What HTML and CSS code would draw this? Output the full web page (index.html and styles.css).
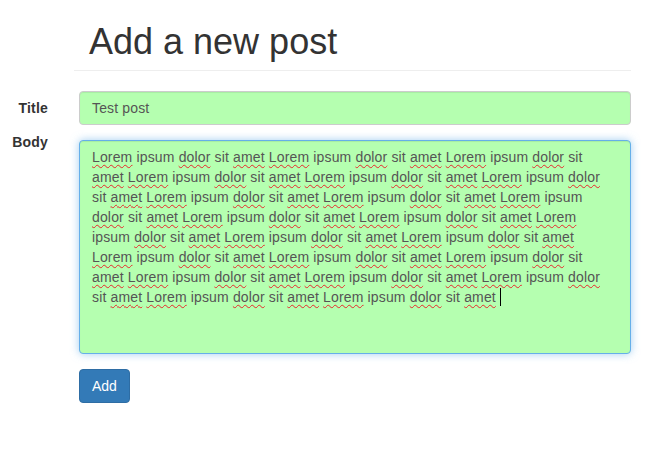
FILE: index.html
```html
<!DOCTYPE html>
<html>
<head>
<meta charset="utf-8">
<link rel="stylesheet" href="styles.css">
</head>
<body>
<div class="page">
  <div class="page-header"><h1>Add a new post</h1></div>
  <form class="form">
    <div class="row row-title">
      <label class="label">Title</label>
      <div class="control input">Test post</div>
    </div>
    <div class="row row-body">
      <label class="label label-body">Body</label>
      <div class="control textarea">
        <span class="line"><span class="sp">Lorem</span> ipsum <span class="sp">dolor</span> sit <span class="sp">amet</span> <span class="sp">Lorem</span> ipsum <span class="sp">dolor</span> sit <span class="sp">amet</span> <span class="sp">Lorem</span> ipsum <span class="sp">dolor</span> sit</span>
        <span class="line"><span class="sp">amet</span> <span class="sp">Lorem</span> ipsum <span class="sp">dolor</span> sit <span class="sp">amet</span> <span class="sp">Lorem</span> ipsum <span class="sp">dolor</span> sit <span class="sp">amet</span> <span class="sp">Lorem</span> ipsum <span class="sp">dolor</span></span>
        <span class="line">sit <span class="sp">amet</span> <span class="sp">Lorem</span> ipsum <span class="sp">dolor</span> sit <span class="sp">amet</span> <span class="sp">Lorem</span> ipsum <span class="sp">dolor</span> sit <span class="sp">amet</span> <span class="sp">Lorem</span> ipsum</span>
        <span class="line"><span class="sp">dolor</span> sit <span class="sp">amet</span> <span class="sp">Lorem</span> ipsum <span class="sp">dolor</span> sit <span class="sp">amet</span> <span class="sp">Lorem</span> ipsum <span class="sp">dolor</span> sit <span class="sp">amet</span> <span class="sp">Lorem</span></span>
        <span class="line">ipsum <span class="sp">dolor</span> sit <span class="sp">amet</span> <span class="sp">Lorem</span> ipsum <span class="sp">dolor</span> sit <span class="sp">amet</span> <span class="sp">Lorem</span> ipsum <span class="sp">dolor</span> sit <span class="sp">amet</span></span>
        <span class="line"><span class="sp">Lorem</span> ipsum <span class="sp">dolor</span> sit <span class="sp">amet</span> <span class="sp">Lorem</span> ipsum <span class="sp">dolor</span> sit <span class="sp">amet</span> <span class="sp">Lorem</span> ipsum <span class="sp">dolor</span> sit</span>
        <span class="line"><span class="sp">amet</span> <span class="sp">Lorem</span> ipsum <span class="sp">dolor</span> sit <span class="sp">amet</span> <span class="sp">Lorem</span> ipsum <span class="sp">dolor</span> sit <span class="sp">amet</span> <span class="sp">Lorem</span> ipsum <span class="sp">dolor</span></span>
        <span class="line">sit <span class="sp">amet</span> <span class="sp">Lorem</span> ipsum <span class="sp">dolor</span> sit <span class="sp">amet</span> <span class="sp">Lorem</span> ipsum <span class="sp">dolor</span> sit <span class="sp">amet</span>&nbsp;<span class="caret"></span></span>
      </div>
    </div>
    <div class="row row-btn">
      <button type="button" class="btn">Add</button>
    </div>
  </form>
</div>
</body>
</html>
```

FILE: styles.css
```css
html, body {
  margin: 0;
  padding: 0;
  background: #fff;
}
body {
  font-family: "Liberation Sans", Arial, sans-serif;
  font-size: 14px;
  line-height: 20px;
  color: #333;
}
.page {
  padding: 0 17px 0 0;
}
.page-header {
  margin: 22px 0 20px 74px;
  padding-bottom: 8px;
  border-bottom: 1px solid #eee;
}
.page-header h1 {
  margin: 0;
  padding-left: 15px;
  font-size: 36px;
  line-height: 39.6px;
  font-weight: 500;
  color: #333;
}
.form {
  margin: 0;
}
.row {
  display: flex;
  align-items: flex-start;
}
.row-title {
  margin-bottom: 7px;
}
.label {
  width: 48px;
  flex: none;
  margin-right: 31px;
  text-align: right;
  font-weight: bold;
  padding-top: 7px;
  color: #333;
  letter-spacing: 0.2px;
}
.label-body {
  padding-top: 0;
}
.control {
  flex: 1;
  box-sizing: border-box;
  background: #b5ffb0;
  border: 1px solid #ccc;
  border-radius: 4px;
  color: #555;
  padding: 6px 12px;
  letter-spacing: 0.15px;
  box-shadow: inset 0 1px 1px rgba(0,0,0,.075);
}
.input {
  height: 34px;
}
.textarea {
  margin-top: 8px;
  height: 214px;
  border-color: #66afe9;
  box-shadow: inset 0 1px 1px rgba(0,0,0,.075), 0 0 8px rgba(102,175,233,.6);
}
.line {
  display: block;
  white-space: nowrap;
}
.sp {
  text-decoration: underline wavy #e8262b;
  text-decoration-thickness: 1px;
  text-underline-offset: 2px;
}
.caret {
  display: inline-block;
  width: 1px;
  height: 18px;
  background: #000;
  vertical-align: -4px;
}
.row-btn {
  margin-top: 15px;
  padding-left: 79px;
}
.btn {
  font-family: "Liberation Sans", Arial, sans-serif;
  font-size: 14px;
  line-height: 20px;
  padding: 6px 12px;
  color: #fff;
  background: #337ab7;
  border: 1px solid #2e6da4;
  border-radius: 4px;
}
```
